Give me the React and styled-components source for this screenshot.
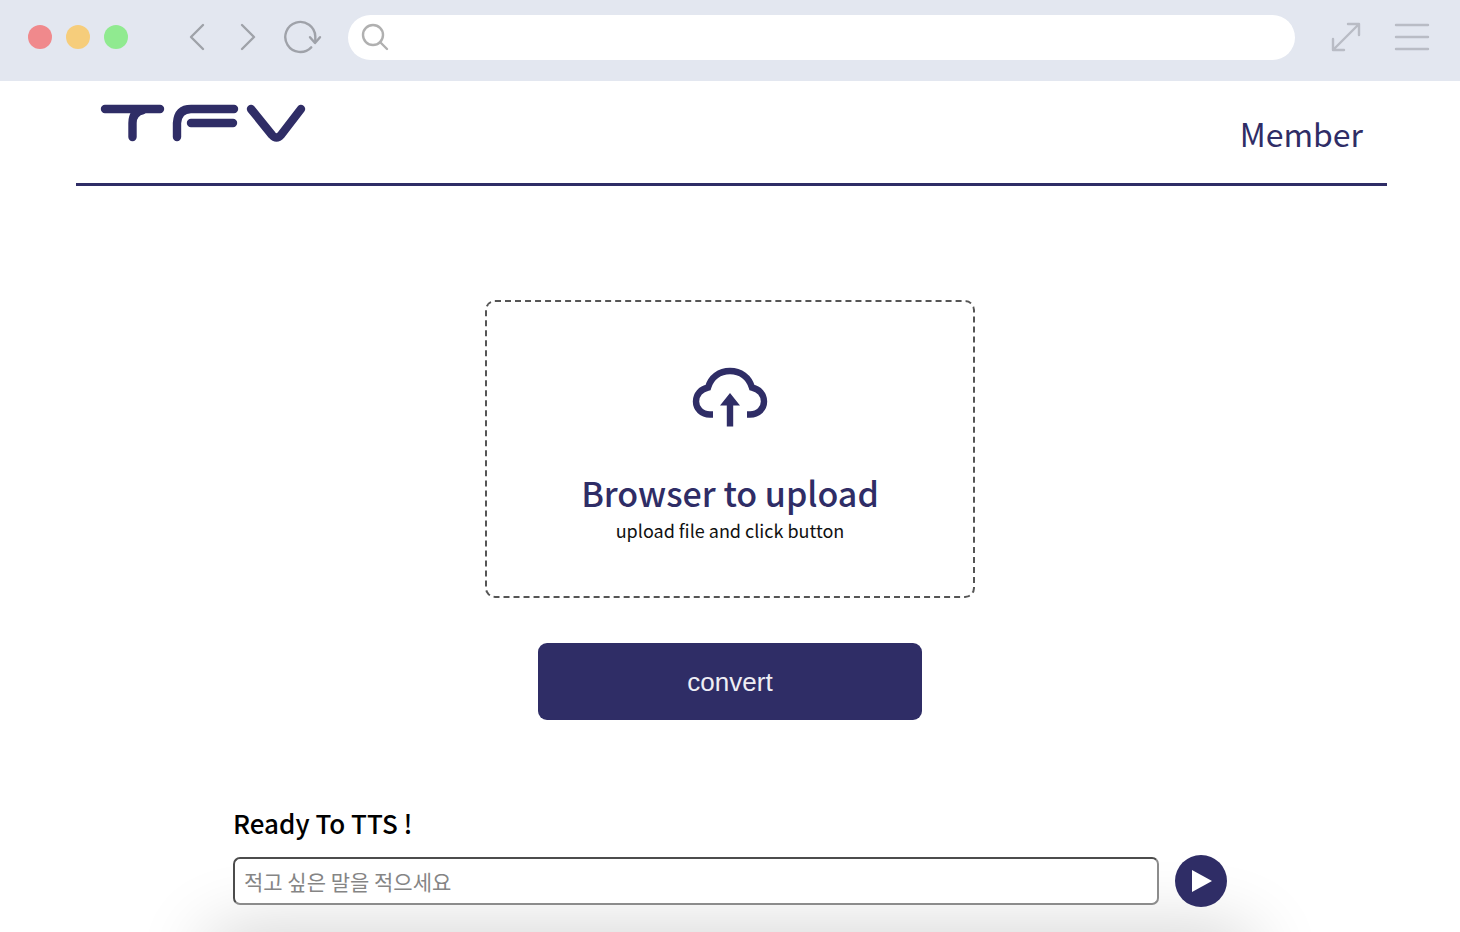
import React from "react";
import styled, { createGlobalStyle } from "styled-components";

const navy = "#2f2d66";

const GlobalStyle = createGlobalStyle`
  *, *::before, *::after { box-sizing: border-box; }
  body {
    margin: 0;
    background: #fff;
    color: #111;
    font-family: "Noto Sans CJK KR", "Noto Sans", sans-serif;
  }
`;

const Page = styled.div`
  position: relative;
  isolation: isolate;
  display: flex;
  flex-direction: column;
  min-height: 100vh;
  overflow: hidden;

  &::after {
    content: "";
    position: absolute;
    z-index: -1;
    left: 14%;
    right: 14%;
    bottom: -60px;
    height: 60px;
    border-radius: 40px;
    box-shadow: 0 0 72px rgba(0, 0, 0, 0.2);
  }
`;

const BrowserBar = styled.div`
  display: flex;
  align-items: center;
  height: 81px;
  padding: 0 30px 7px 28px;
  background: #e3e7f0;
`;

const Lights = styled.div`
  display: flex;
  gap: 14px;
  margin-right: 60px;
`;

const Light = styled.span`
  width: 24px;
  height: 24px;
  border-radius: 50%;
  background: ${(p) => p.$color};
`;

const IconButton = styled.button`
  display: flex;
  padding: 0;
  border: 0;
  background: none;
  color: ${(p) => (p.$light ? "#b9bcc5" : "#9fa2a9")};
  cursor: pointer;
`;

const NavGroup = styled.div`
  display: flex;
  align-items: center;
  gap: ${(p) => p.$gap};
`;

const AddressBar = styled.label`
  display: flex;
  flex: 1;
  align-items: center;
  height: 45px;
  margin: 0 35px 0 26px;
  padding: 0 13px;
  border-radius: 23px;
  background: #fff;
  color: #b0b0b0;
`;

const AddressInput = styled.input`
  flex: 1;
  min-width: 0;
  margin-left: 12px;
  border: 0;
  outline: 0;
  background: none;
  font-size: 20px;
`;

const Header = styled.header`
  display: flex;
  justify-content: space-between;
  align-items: flex-start;
  height: 105px;
  margin: 0 73px 0 76px;
  padding: 22px 24px 0;
  border-bottom: 3px solid ${navy};
`;

const HomeLink = styled.a`
  display: flex;
  color: ${navy};
`;

const MemberLink = styled.a`
  color: ${navy};
  font-size: 32px;
  line-height: 60px;
  text-decoration: none;
`;

const Main = styled.main`
  display: flex;
  flex-direction: column;
  align-items: center;
  padding: 114px 24px 24px;
`;

const DropZone = styled.label`
  display: flex;
  flex-direction: column;
  align-items: center;
  width: 100%;
  max-width: 490px;
  height: 298px;
  padding-top: 65px;
  border: 2px dashed #555;
  border-radius: 10px;
  cursor: pointer;
`;

const FileInput = styled.input`
  position: absolute;
  width: 1px;
  height: 1px;
  opacity: 0;
`;

const DropTitle = styled.span`
  margin-top: 42px;
  color: ${navy};
  font-size: 34px;
  font-weight: 500;
  line-height: 48px;
`;

const DropHint = styled.span`
  font-size: 18px;
  line-height: 26px;
`;

const ConvertButton = styled.button`
  width: 100%;
  max-width: 384px;
  height: 77px;
  margin-top: 45px;
  padding: 2px 0 0;
  border: 0;
  border-radius: 9px;
  background: ${navy};
  color: #eeeef4;
  font-family: "Liberation Sans", Arial, sans-serif;
  font-size: 26px;
  cursor: pointer;
`;

const Speech = styled.form`
  width: 100%;
  max-width: 994px;
  margin-top: 84px;
`;

const SpeechTitle = styled.label`
  display: block;
  color: #000;
  font-size: 26px;
  font-weight: 500;
  line-height: 38px;
`;

const SpeechRow = styled.div`
  display: flex;
  align-items: center;
  gap: 16px;
  margin-top: 13px;
`;

const SpeechInput = styled.input`
  flex: 1;
  min-width: 0;
  height: 48px;
  padding: 0 9px;
  border: 2px solid;
  border-color: #4c4c4c #8c8c8c #8c8c8c #4c4c4c;
  border-radius: 7px;
  background: #fff;
  font-family: inherit;
  font-size: 21px;

  &::placeholder { color: #858585; opacity: 1; }
`;

const PlayButton = styled.button`
  display: flex;
  align-items: center;
  justify-content: center;
  width: 52px;
  height: 52px;
  padding: 0;
  border: 0;
  border-radius: 50%;
  background: ${navy};
  color: #fff;
  cursor: pointer;
`;

const Drawing = ({ w, h, stroke = 2.4, children }) => (
  <svg
    width={w}
    height={h}
    viewBox={`0 0 ${w} ${h}`}
    fill="none"
    stroke="currentColor"
    strokeWidth={stroke}
    strokeLinecap="round"
    strokeLinejoin="round"
    aria-hidden="true"
  >
    {children}
  </svg>
);

export default function App() {
  return (
    <>
      <GlobalStyle />
      <Page>
        <BrowserBar>
          <Lights>
            <Light $color="#f0898c" />
            <Light $color="#f6cd7b" />
            <Light $color="#90ea90" />
          </Lights>
          <NavGroup $gap="33px">
            <IconButton type="button" aria-label="Back">
              <Drawing w={18} h={28}>
                <path d="M15 2 3 14l12 12" />
              </Drawing>
            </IconButton>
            <IconButton type="button" aria-label="Forward">
              <Drawing w={18} h={28}>
                <path d="M3 2l12 12L3 26" />
              </Drawing>
            </IconButton>
          </NavGroup>
          <IconButton type="button" aria-label="Reload">
            <Drawing w={65} h={34}>
              <path d="M54.200 27.300A15 15 0 1 1 58.300 16.500V21" />
              <path d="M53 17.200 58 23 63 17.200" />
            </Drawing>
          </IconButton>
          <AddressBar>
            <Drawing w={28} h={28}>
              <circle cx="12" cy="12" r="10" />
              <path d="M19 19l7 7" />
            </Drawing>
            <AddressInput type="text" aria-label="Address" />
          </AddressBar>
          <NavGroup $gap="32px">
            <IconButton type="button" aria-label="Full screen" $light>
              <Drawing w={32} h={30}>
                <path d="M3 28 29 2M18 2h11v11M3 17v11h11" />
              </Drawing>
            </IconButton>
            <IconButton type="button" aria-label="Menu" $light>
              <Drawing w={36} h={28}>
                <path d="M2 2h32M2 14h32M2 26h32" />
              </Drawing>
            </IconButton>
          </NavGroup>
        </BrowserBar>

        <Header>
          <HomeLink href="#" aria-label="TFV">
            <Drawing w={207} h={42} stroke={8.4}>
              <path d="M5 6h55M32.500 34V20Q32.500 9 43 7" />
              <path d="M77 34V20Q78 6 91 6h43M91 20h42" />
              <path d="M151 6l21 26q4.500 5 9 0L201 6" />
            </Drawing>
          </HomeLink>
          <MemberLink href="#">Member</MemberLink>
        </Header>

        <Main>
          <DropZone>
            <FileInput type="file" />
            <svg width="76" height="60" viewBox="0 0 76 60" aria-hidden="true">
              <path
                d="M21 47.500h-3C9.500 47.500 4 41.500 4 34.500c0-7 5-12.500 12-14C19 10 27.500 4 38 4s19 6 22 16.500c7 1.500 12 7 12 14 0 7-5.500 13-14 13h-3"
                fill="none"
                stroke={navy}
                strokeWidth="6.400"
              />
              <path d="M38 26 48 38.500H41.200V59.500H34.800V38.500H28z" fill={navy} />
            </svg>
            <DropTitle>Browser to upload</DropTitle>
            <DropHint>upload file and click button</DropHint>
          </DropZone>
          <ConvertButton type="button">convert</ConvertButton>

          <Speech onSubmit={(e) => e.preventDefault()}>
            <SpeechTitle htmlFor="speech-text">Ready To TTS !</SpeechTitle>
            <SpeechRow>
              <SpeechInput id="speech-text" type="text" placeholder="적고 싶은 말을 적으세요" />
              <PlayButton type="submit" aria-label="Play">
                <svg width="22" height="24" viewBox="0 0 22 24" aria-hidden="true">
                  <path d="M2 1v22l20-11z" fill="currentColor" />
                </svg>
              </PlayButton>
            </SpeechRow>
          </Speech>
        </Main>
      </Page>
    </>
  );
}
